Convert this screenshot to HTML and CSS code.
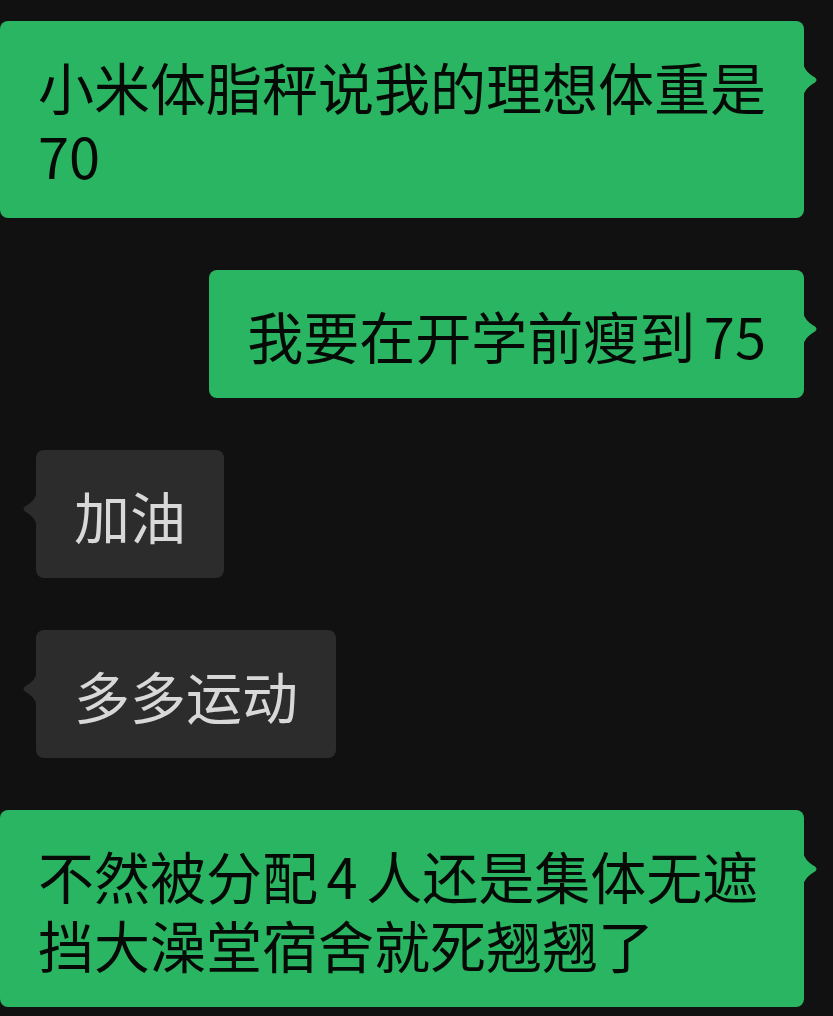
FILE: index.html
```html
<!DOCTYPE html>
<html>
  <head>
    <meta charset="UTF-8">
    <title>聊天</title>
    <link rel="stylesheet" href="styles.css">
  </head>
  <body>
    <div class="chat">
      <div class="msg out">
        小米体脂秤说我的理想体重是70
        <svg class="tail" viewBox="0 0 15 34"><path d="M0 0 C1 5 4 10 12 14.5 Q15 17 12 19.5 C4 24 1 29 0 34 Z"/></svg>
      </div>
      <div class="msg out">
        我要在开学前瘦到 75
        <svg class="tail" viewBox="0 0 15 34"><path d="M0 0 C1 5 4 10 12 14.5 Q15 17 12 19.5 C4 24 1 29 0 34 Z"/></svg>
      </div>
      <div class="msg in">
        加油
        <svg class="tail" viewBox="0 0 15 34"><path d="M15 0 C14 5 11 10 3 14.5 Q0 17 3 19.5 C11 24 14 29 15 34 Z"/></svg>
      </div>
      <div class="msg in">
        多多运动
        <svg class="tail" viewBox="0 0 15 34"><path d="M15 0 C14 5 11 10 3 14.5 Q0 17 3 19.5 C11 24 14 29 15 34 Z"/></svg>
      </div>
      <div class="msg out">
        不然被分配 4 人还是集体无遮挡大澡堂宿舍就死翘翘了
        <svg class="tail" viewBox="0 0 15 34"><path d="M0 0 C1 5 4 10 12 14.5 Q15 17 12 19.5 C4 24 1 29 0 34 Z"/></svg>
      </div>
    </div>
  </body>
</html>
```

FILE: styles.css
```css
html, body {
  margin: 0;
  background-color: #111111;
}
body {
  height: 1016px;
  overflow: hidden;
  font-family: "Noto Sans CJK SC", "Noto Sans", sans-serif;
}
.chat {
  display: flex;
  flex-direction: column;
  gap: 52px;
  padding: 21px 29px 0 0;
}
.msg {
  position: relative;
  box-sizing: border-box;
  max-width: 808px;
  padding: 29.5px 38px;
  border-radius: 8px;
  font-size: 56px;
  line-height: 69px;
  word-spacing: -4px;
}
.msg.out {
  align-self: flex-end;
  background-color: #2ab562;
  color: #060a06;
}
.msg.in {
  align-self: flex-start;
  margin-left: 36px;
  background-color: #2c2c2c;
  color: #d8d8d8;
}
.tail {
  position: absolute;
  top: 42px;
  width: 15px;
  height: 34px;
}
.out .tail {
  right: -14px;
  fill: #2ab562;
}
.in .tail {
  left: -14px;
  fill: #2c2c2c;
}
```
